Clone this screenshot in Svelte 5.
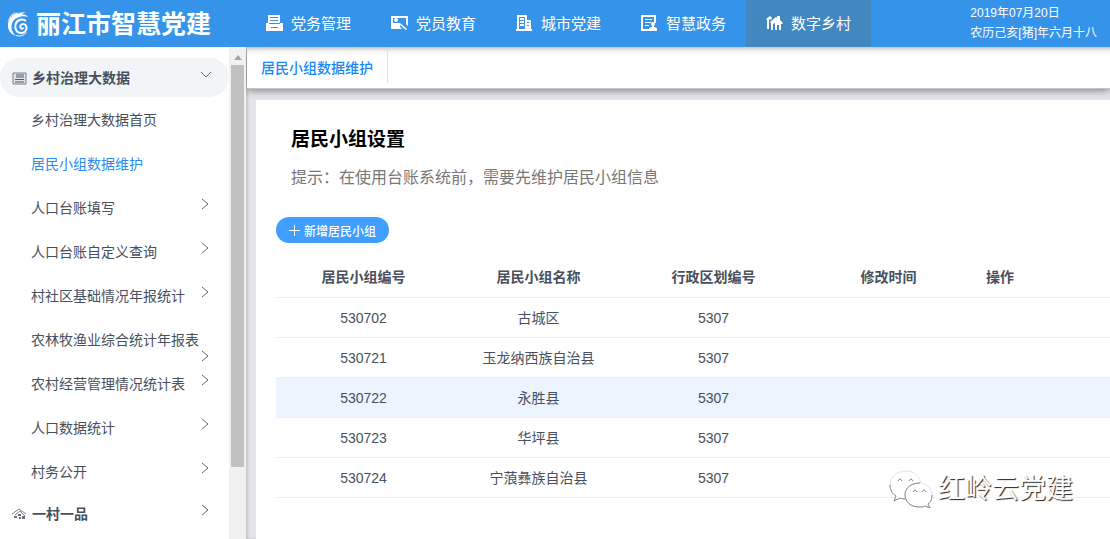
<script>
  const navItems = [
    { label: "党务管理", icon: "archive" },
    { label: "党员教育", icon: "teach" },
    { label: "城市党建", icon: "city" },
    { label: "智慧政务", icon: "form" },
    { label: "数字乡村", icon: "village" },
  ];

  const menuItems = [
    { label: "乡村治理大数据首页" },
    { label: "居民小组数据维护" },
    { label: "人口台账填写", children: true },
    { label: "人口台账自定义查询", children: true },
    { label: "村社区基础情况年报统计", children: true },
    { label: "农林牧渔业综合统计年报表", children: true },
    { label: "农村经营管理情况统计表", children: true },
    { label: "人口数据统计", children: true },
    { label: "村务公开", children: true },
  ];

  const columns = ["居民小组编号", "居民小组名称", "行政区划编号", "修改时间", "操作"];

  const rows = [
    { id: "530702", name: "古城区", area: "5307" },
    { id: "530721", name: "玉龙纳西族自治县", area: "5307" },
    { id: "530722", name: "永胜县", area: "5307" },
    { id: "530723", name: "华坪县", area: "5307" },
    { id: "530724", name: "宁蒗彝族自治县", area: "5307" },
  ];

  let activeNav = $state("数字乡村");
  let activeMenu = $state("居民小组数据维护");
  let selected = $state("530722");

  function pick(event, fn) {
    event.preventDefault();
    fn();
  }
</script>

{#snippet arrow()}
  <svg class="arrow" viewBox="0 0 14 12" aria-hidden="true"><path d="M4 1l6 5-6 5" /></svg>
{/snippet}

<div class="app">
  <header class="header">
    <div class="brand">
      <svg class="brand__logo" viewBox="0 0 22 26" aria-hidden="true">
        <path
          d="M11.500 1C6 3.500 1.500 7 1 13.500c-.4 5.500 3 10 8 11.500-3-2.500-5-6-4.500-10C5 10 8 7 14 5.500c2.500-.6 5-.3 7 .5-1.500-2-4-3-7-2.500 1.500-1 3-1.700 5-1.700-3-1.300-6-.3-9 1.700z"
          fill="#fff"
        />
        <path d="M4 4.500C2 7 .8 9 .6 11.500 2 7.500 5 4 9 1.500 7 1.800 5.500 2.800 4 4.500z" fill="#fff" />
        <path
          d="M19 10c-3-2.500-9-2-10.500 3.500-1.200 4.500 1.500 8.500 5.500 8.500 4 0 6-3 5.500-6-.5-2.500-3-3.500-4.700-2.700-1.900.9-2 3.200-.6 4 1 .6 2 .2 2.200-.7"
          fill="none"
          stroke="#fff"
          stroke-width="2"
        />
        <path d="M9 24.500c4 1.300 8 0 10.500-3" fill="none" stroke="#fff" />
      </svg>
      <span class="brand__name">丽江市智慧党建</span>
    </div>

    <nav class="nav">
      {#each navItems as item}
        <a
          class="nav__item"
          class:nav__item--active={item.label === activeNav}
          href="#nav"
          onclick={(e) => pick(e, () => (activeNav = item.label))}
        >
          <svg class="nav__icon" viewBox="0 0 17 17" aria-hidden="true">
            {#if item.icon === "archive"}
              <path
                fill-rule="evenodd"
                d="M2 0h12v8h3v8H0V8h2zM4 2v1h8V2zM4 5v1h8V5zM3 8v1h11V8zM5 12v1h7v-1z"
              />
            {:else if item.icon === "teach"}
              <path d="M0 1h17v10l-2-2V3H2v9h7l2 2H0z" />
              <circle cx="5" cy="5" r="2" />
              <path d="M2 11V8h7l7 6-1 1-6-5v2H2z" />
            {:else if item.icon === "city"}
              <path
                fill-rule="evenodd"
                d="M1 0h10v5h4v9h1v2H0v-2h1zM3 2v12h6V2zM11 7v1h2V7zM11 10v1h2v-1z"
              />
              <path d="M4 3h4v2H4zM4 6h4v2H4zM4 9h4v2H4z" />
            {:else if item.icon === "form"}
              <path d="M0 0h15v8h-2V2H2v12h6v2H0z" />
              <path d="M4 4h7v1H4zM4 7h6v1H4zM4 10h4v1H4z" />
              <circle cx="12" cy="9" r="2" />
              <path d="M8 16v-3l3-1v-2h2v2l3 1v3z" />
            {:else}
              <path d="M0 4l4-3 2 2-1 2-1-1-1 1v9H1V5z" />
              <path d="M5 8l-1-1 6-5 1 1V1h3v4l3 3-1 1h-1v6h-2v-5h-2v5H9V8L7 9v6H5z" />
            {/if}
          </svg>
          <span>{item.label}</span>
        </a>
      {/each}
    </nav>

    <div class="date">
      <div>2019年07月20日</div>
      <div>农历己亥[猪]年六月十八</div>
    </div>
  </header>

  <div class="body">
    <aside class="sidebar">
      <div class="menu">
        <a class="group group--open" href="#group" onclick={(e) => e.preventDefault()}>
          <svg class="group__icon" viewBox="0 0 15 13" aria-hidden="true">
            <path d="M1 1h13v11H1z" fill="#dfe3ea" stroke="#7a808c" />
            <path d="M4 3h8M4 5h8M3 7.500h9M3 10h9" stroke="#535a67" />
          </svg>
          <span>乡村治理大数据</span>
          <svg class="arrow" viewBox="0 0 14 12" aria-hidden="true"><path d="M3 4l5 5 5-5" /></svg>
        </a>
        <ul class="list">
          {#each menuItems as item}
            <li>
              <a
                class="item"
                class:item--active={item.label === activeMenu}
                href="#menu"
                onclick={(e) => pick(e, () => (activeMenu = item.label))}
              >{item.label}{#if item.children}{@render arrow()}{/if}</a>
            </li>
          {/each}
        </ul>
        <a class="group" href="#group" onclick={(e) => e.preventDefault()}>
          <svg class="group__icon" viewBox="0 0 15 13" aria-hidden="true">
            <path d="M0 6l7-5 7 5M3 7l5-4 5 5" fill="none" stroke="#7a808c" />
            <path d="M2 8h3v2H2zM6 6h3v2H6zM7 9h2v2H7zM10 8h3v3h-3z" fill="#6b7280" />
          </svg>
          <span>一村一品</span>
          {@render arrow()}
        </a>
      </div>
      <div class="scrollbar">
        <span class="scrollbar__up"></span>
        <span class="scrollbar__thumb"></span>
      </div>
    </aside>

    <main class="main">
      <div class="tabs">
        <a class="tab" href="#tab" onclick={(e) => e.preventDefault()}>居民小组数据维护</a>
      </div>

      <section class="card">
        <h1 class="card__title">居民小组设置</h1>
        <p class="card__tip">提示：在使用台账系统前，需要先维护居民小组信息</p>
        <button class="add" type="button">
          <svg class="add__icon" viewBox="0 0 11 11" aria-hidden="true"><path d="M5.500 0v11M0 5.500h11" /></svg>
          新增居民小组
        </button>

        <table class="table">
          <thead>
            <tr>
              {#each columns as column}
                <th>{column}</th>
              {/each}
            </tr>
          </thead>
          <tbody>
            {#each rows as row}
              <tr class:current={row.id === selected} onclick={() => (selected = row.id)}>
                <td>{row.id}</td>
                <td>{row.name}</td>
                <td>{row.area}</td>
                <td></td>
                <td></td>
              </tr>
            {/each}
          </tbody>
        </table>
      </section>
    </main>
  </div>

  <div class="watermark">
    <svg class="watermark__icon" viewBox="0 0 44 38" aria-hidden="true">
      <path class="shade" d="M17 1C8 1 1 7 1 15c0 5 2 8 6 11l-2 5 6-3c3 1 5 1 8 1 8-1 13-7 13-14C32 7 25 1 17 1z" />
      <path class="line" d="M1 15c0 5 2 8 6 11l-2 5 6-3c2 1 4 1 6 1" />
      <path class="shade" d="M30 13c-8 0-14 5-14 12s6 12 14 12c2 0 4 0 6-1l5 2-2-4c3-2 4-5 4-9 0-7-6-12-13-12z" />
      <path class="line" d="M31 13c-9 0-15 5-15 12s6 12 14 12c2 0 4 0 6-1l5 2-2-4c3-2 4-5 4-9" />
      <path class="line" d="M9 11q2-4 4 0M20 11q2-4 4 0M24 22q2-4 4 0M33 22q2-4 4 0" />
    </svg>
    <span>红岭云党建</span>
  </div>
</div>

<style>
  :global(body) {
    margin: 0;
  }

  .app {
    position: relative;
    display: flex;
    flex-direction: column;
    height: 100vh;
    overflow: hidden;
    font-family: "Liberation Sans", "Noto Sans CJK SC", sans-serif;
    font-size: 14px;
    line-height: 20px;
    color: #48505e;
  }

  a {
    color: inherit;
    text-decoration: none;
  }

  .header {
    z-index: 1;
    display: flex;
    flex: none;
    height: 47px;
    background: #3594e9;
    color: #fff;
  }

  .brand {
    display: flex;
    align-items: center;
    flex: none;
    gap: 7px;
    width: 239px;
    padding-left: 7px;
  }

  .brand__logo {
    width: 22px;
    height: 26px;
  }

  .brand__name {
    font-size: 25px;
    font-weight: 700;
    white-space: nowrap;
  }

  .nav {
    display: flex;
    flex: 1;
  }

  .nav__item {
    display: flex;
    align-items: center;
    gap: 8px;
    width: 105px;
    padding-left: 20px;
    font-size: 15px;
    white-space: nowrap;
  }

  .nav__item--active {
    background: #4387c1;
  }

  .nav__icon {
    width: 17px;
    height: 17px;
    fill: #fff;
  }

  .date {
    flex: none;
    padding: 3px 13px 0 0;
    font-size: 12px;
  }

  .body {
    display: flex;
    flex: 1;
    min-height: 0;
  }

  .sidebar {
    z-index: 1;
    display: flex;
    flex: none;
    width: 246px;
    background: #fff;
  }

  .menu {
    flex: 1;
    padding-top: 11px;
    overflow: hidden;
  }

  .group {
    display: block;
    padding: 10px 17px 9px 12px;
    border-radius: 20px;
    font-weight: 700;
  }

  .group--open {
    background: #f1f5f8;
  }

  .group__icon {
    width: 15px;
    height: 13px;
    margin-right: 1px;
    vertical-align: -2px;
  }

  .arrow {
    float: right;
    width: 14px;
    height: 12px;
    fill: none;
    stroke: #606672;
  }

  .list {
    margin: 0;
    padding: 1px 0 0;
    list-style: none;
  }

  .item {
    display: block;
    height: 20px;
    padding: 12px 17px 12px 31px;
  }

  .item--active {
    color: #2a8cf2;
  }

  .scrollbar {
    display: flex;
    flex-direction: column;
    align-items: center;
    gap: 5px;
    width: 17px;
    padding-top: 8px;
    background: #f1f1f1;
  }

  .scrollbar__up {
    border: 4px solid transparent;
    border-top: 0;
    border-bottom: 5px solid #a3a3a3;
  }

  .scrollbar__thumb {
    width: 13px;
    height: 83%;
    background: #c1c1c1;
  }

  .main {
    display: flex;
    flex-direction: column;
    flex: 1;
    min-width: 0;
    background: #e4e6eb;
    box-shadow: inset 2px 0 3px rgba(0, 0, 0, 0.15);
  }

  .tabs {
    display: flex;
    margin-left: 1px;
    height: 41px;
    border-bottom: 1px solid #c4c4c4;
    background: linear-gradient(#c8c8c8, #f2f2f2 4px, #fff 8px);
    box-shadow: 0 1px 8px rgba(0, 0, 0, 0.5);
  }

  .tab {
    height: 36px;
    padding: 0 14px;
    border-right: 1px solid #dcdfe6;
    line-height: 42px;
    font-weight: 500;
    color: #1989fa;
  }

  .card {
    flex: 1;
    margin: 11px 0 0 10px;
    padding: 27px 0 0 20px;
    background: #fff;
  }

  .card__title {
    margin: 0 0 0 15px;
    font-size: 19px;
    line-height: 26px;
    color: #000;
  }

  .card__tip {
    margin: 12px 0 26px 15px;
    font-size: 16px;
    line-height: 26px;
    color: #777;
  }

  .add {
    display: flex;
    align-items: center;
    gap: 4px;
    height: 26px;
    margin-bottom: 14px;
    padding: 0 13px;
    border: 0;
    border-radius: 13px;
    background: #409eff;
    color: #fff;
    font-family: inherit;
    font-size: 12px;
    font-weight: 500;
  }

  .add__icon {
    width: 11px;
    height: 11px;
    stroke: #fff;
  }

  .table {
    width: 100%;
    table-layout: fixed;
    border-spacing: 0;
  }

  .table th,
  .table td {
    height: 39px;
    padding: 0 10px;
    border-bottom: 1px solid #ebeef2;
    text-align: center;
  }

  .table th {
    width: 155px;
    height: 40px;
  }

  .table th:last-child {
    width: auto;
    text-align: left;
  }

  .current {
    background: #ebf4ff;
  }

  .watermark {
    position: absolute;
    right: 37px;
    bottom: 31px;
    display: flex;
    align-items: center;
    gap: 5px;
    font-size: 27px;
    line-height: 38px;
    color: #fff;
    text-shadow: 1px 1px 1px #222;
    pointer-events: none;
  }

  .watermark__icon {
    width: 44px;
    height: 38px;
  }

  .shade {
    fill: #fff;
    stroke: #e4e4e4;
  }

  .line {
    fill: none;
    stroke: #8a8a8a;
  }
</style>
